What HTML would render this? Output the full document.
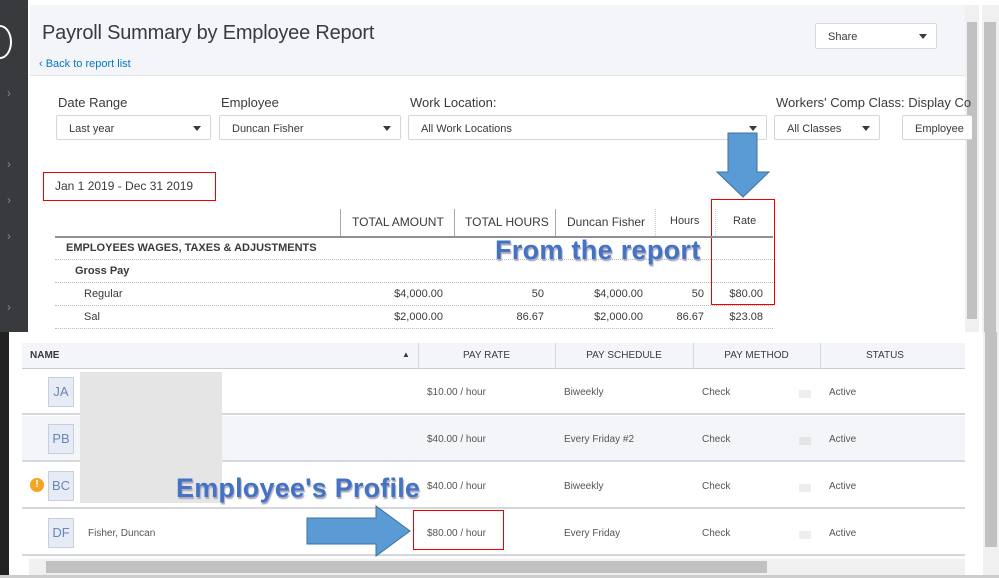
<!DOCTYPE html>
<html><head><meta charset="utf-8"><style>
*{box-sizing:border-box;margin:0;padding:0}
body{width:999px;height:578px;overflow:hidden;background:#fff;font-family:"Liberation Sans",sans-serif;color:#393a3d;position:relative}
.a{position:absolute}
.sel{position:absolute;height:25px;border:1px solid #d4d7dc;border-radius:2px;background:#fff;font-size:11px;line-height:26px;padding-left:12px}
.sel i{position:absolute;right:9px;top:10px;width:0;height:0;border-left:4px solid transparent;border-right:4px solid transparent;border-top:5px solid #393a3d}
.lbl{position:absolute;font-size:13px;top:95px}
.r{position:absolute;font-size:11px;text-align:right}
.dl{position:absolute;left:55px;width:718px;border-top:1px dotted #bbb}
.hdr{position:absolute;font-size:11px;color:#393a3d;text-align:center;top:350px}
.row{position:absolute;left:22px;width:943px;height:46px;border-bottom:2px solid #d4d7dc}
.av{position:absolute;left:26px;width:16px;height:30px;top:8px;width:26px;border:1px solid #ccd;background:#e6ecf5;color:#6b85b4;font-size:13px;text-align:center;line-height:28px}
.c{position:absolute;top:18px;font-size:10px;color:#555}
</style></head><body>
<div class="a" style="left:0;top:0;width:28px;height:332px;background:#393a3d"></div>
<div class="a" style="left:-12px;top:25px;width:24px;height:34px;border:2px solid #fff;border-radius:50%"></div>
<div class="a" style="left:7px;top:86px;color:#888;font-size:12px">›</div>
<div class="a" style="left:7px;top:157px;color:#888;font-size:12px">›</div>
<div class="a" style="left:7px;top:193px;color:#888;font-size:12px">›</div>
<div class="a" style="left:7px;top:229px;color:#888;font-size:12px">›</div>
<div class="a" style="left:7px;top:300px;color:#888;font-size:12px">›</div>
<div class="a" style="left:30px;top:5px;width:935px;height:71px;background:#f4f5f8;border-bottom:1px solid #e3e5e8"></div>
<div class="a" style="left:42px;top:22px;font-size:20px;letter-spacing:-0.2px;color:#393a3d">Payroll Summary by Employee Report</div>
<div class="a" style="left:39px;top:58px;font-size:11px;color:#0077c5">‹ Back to report list</div>
<div class="sel" style="left:815px;top:23px;width:122px;height:26px;line-height:27px">Share<i></i></div>
<div class="a" style="left:965px;top:5px;width:14px;height:330px;background:#f0f0f0"></div>
<div class="a" style="left:967px;top:22px;width:10px;height:297px;background:#c1c1c1"></div>
<div class="a" style="left:982px;top:5px;width:17px;height:330px;background:#f0f0f0"></div>
<div class="a" style="left:984px;top:22px;width:12px;height:310px;background:#c1c1c1"></div>
<div class="lbl" style="left:58px">Date Range</div>
<div class="lbl" style="left:221px">Employee</div>
<div class="lbl" style="left:410px">Work Location:</div>
<div class="lbl" style="left:776px">Workers' Comp Class: Display Co</div>
<div class="sel" style="left:56px;top:115px;width:155px">Last year<i></i></div>
<div class="sel" style="left:219px;top:115px;width:182px">Duncan Fisher<i></i></div>
<div class="sel" style="left:408px;top:115px;width:359px">All Work Locations<i></i></div>
<div class="sel" style="left:774px;top:115px;width:106px">All Classes<i></i></div>
<div class="sel" style="left:902px;top:115px;width:70px;border-right:none">Employee</div>
<div class="a" style="left:43px;top:172px;width:173px;height:29px;border:1px solid #e00;font-size:12px;line-height:26px;padding-left:11px">Jan 1 2019 - Dec 31 2019</div>
<svg class="a" style="left:716px;top:132px" width="54" height="66"><polygon points="12,1 41,1 41,40 53,40 27,65 1,40 12,40" fill="#5b9bd5" stroke="#41719c"/></svg>
<div class="a" style="left:711px;top:199px;width:64px;height:106px;border:1px solid #e00"></div>
<div class="a" style="left:340px;top:209px;height:27px;border-left:1px solid #aaa"></div>
<div class="a" style="left:454px;top:209px;height:27px;border-left:1px solid #aaa"></div>
<div class="a" style="left:555px;top:209px;height:27px;border-left:1px solid #aaa"></div>
<div class="a" style="left:655px;top:209px;height:27px;border-left:1px dotted #ccc"></div>
<div class="a" style="left:715px;top:209px;height:27px;border-left:1px dotted #ccc"></div>
<div class="a" style="left:352px;top:215px;font-size:12px">TOTAL AMOUNT</div>
<div class="a" style="left:465px;top:215px;font-size:12px">TOTAL HOURS</div>
<div class="a" style="left:567px;top:215px;font-size:12px">Duncan Fisher</div>
<div class="a" style="left:670px;top:215px;font-size:11px">Hours</div>
<div class="a" style="left:733px;top:215px;font-size:11px">Rate</div>
<div class="a" style="left:55px;top:236px;width:718px;border-top:2px solid #8d9096"></div>
<div class="a" style="left:66px;top:242px;font-size:11px;font-weight:bold;color:#393a3d">EMPLOYEES WAGES, TAXES &amp; ADJUSTMENTS</div>
<div class="dl" style="top:259px"></div>
<div class="a" style="left:75px;top:265px;font-size:11px;font-weight:bold">Gross Pay</div>
<div class="dl" style="top:282px"></div>
<div class="a" style="left:84px;top:288px;font-size:11px">Regular</div>
<div class="r" style="right:556px;top:288px">$4,000.00</div>
<div class="r" style="right:455px;top:288px">50</div>
<div class="r" style="right:356px;top:288px">$4,000.00</div>
<div class="r" style="right:295px;top:288px">50</div>
<div class="r" style="right:236px;top:288px">$80.00</div>
<div class="dl" style="top:305px"></div>
<div class="a" style="left:84px;top:311px;font-size:11px">Sal</div>
<div class="r" style="right:556px;top:311px">$2,000.00</div>
<div class="r" style="right:455px;top:311px">86.67</div>
<div class="r" style="right:356px;top:311px">$2,000.00</div>
<div class="r" style="right:295px;top:311px">86.67</div>
<div class="r" style="right:236px;top:311px">$23.08</div>
<div class="dl" style="top:328px"></div>
<div class="a" style="left:495px;top:235px;font-size:27px;font-weight:bold;letter-spacing:0.3px;color:#4472c4;text-shadow:1px 2px 1px #aab">From the report</div>
<!-- lower panel -->
<div class="a" style="left:9px;top:332px;width:990px;height:246px;background:#fff"></div>
<div class="a" style="left:0;top:332px;width:9px;height:246px;background:#222"></div>
<div class="a" style="left:22px;top:343px;width:943px;height:26px;background:#f4f5f8;border-bottom:1px solid #c9ccd1"></div>
<div class="a" style="left:30px;top:350px;font-size:10px;font-weight:bold">NAME</div>
<div class="a" style="left:402px;top:350px;font-size:8px">▲</div>
<div class="a" style="left:418px;top:343px;height:26px;border-left:1px solid #d4d7dc"></div>
<div class="a" style="left:555px;top:343px;height:26px;border-left:1px solid #d4d7dc"></div>
<div class="a" style="left:693px;top:343px;height:26px;border-left:1px solid #d4d7dc"></div>
<div class="a" style="left:820px;top:343px;height:26px;border-left:1px solid #d4d7dc"></div>
<div class="hdr" style="left:418px;width:137px;font-size:10px">PAY RATE</div>
<div class="hdr" style="left:555px;width:138px;font-size:10px">PAY SCHEDULE</div>
<div class="hdr" style="left:693px;width:127px;font-size:10px">PAY METHOD</div>
<div class="hdr" style="left:820px;width:130px;font-size:10px">STATUS</div>
<div class="row" style="top:369px"><div class="av">JA</div><div class="c" style="left:405px">$10.00 / hour</div><div class="c" style="left:542px">Biweekly</div><div class="c" style="left:680px">Check</div><div class="c" style="left:777px;top:21px;width:12px;height:8px;background:#eee"></div><div class="c" style="left:807px">Active</div></div>
<div class="row" style="top:416px;background:#f4f5f8"><div class="av">PB</div><div class="c" style="left:405px">$40.00 / hour</div><div class="c" style="left:542px">Every Friday #2</div><div class="c" style="left:680px">Check</div><div class="c" style="left:777px;top:21px;width:12px;height:8px;background:#e4e4e4"></div><div class="c" style="left:807px">Active</div></div>
<div class="row" style="top:463px"><div class="a" style="left:8px;top:15px;width:14px;height:14px;border-radius:50%;background:#f4a623;color:#fff;font-size:10px;font-weight:bold;text-align:center;line-height:14px">!</div><div class="av">BC</div><div class="c" style="left:405px">$40.00 / hour</div><div class="c" style="left:542px">Biweekly</div><div class="c" style="left:680px">Check</div><div class="c" style="left:777px;top:21px;width:12px;height:8px;background:#eee"></div><div class="c" style="left:807px">Active</div></div>
<div class="row" style="top:510px"><div class="av">DF</div><div class="c" style="left:66px">Fisher, Duncan</div><div class="c" style="left:405px">$80.00 / hour</div><div class="c" style="left:542px">Every Friday</div><div class="c" style="left:680px">Check</div><div class="c" style="left:777px;top:21px;width:12px;height:8px;background:#eee"></div><div class="c" style="left:807px">Active</div></div>
<div class="a" style="left:80px;top:372px;width:142px;height:131px;background:#e5e5e5"></div>
<div class="a" style="left:176px;top:473px;font-size:27px;font-weight:bold;letter-spacing:0.2px;color:#4472c4;text-shadow:1px 2px 1px #aab">Employee's Profile</div>
<svg class="a" style="left:306px;top:505px" width="106" height="52"><polygon points="1,13 70,13 70,1 104,26 70,51 70,39 1,39" fill="#5b9bd5" stroke="#41719c"/></svg>
<div class="a" style="left:413px;top:510px;width:91px;height:40px;border:1px solid #e00"></div>
<div class="a" style="left:29px;top:559px;width:936px;height:16px;background:#f0f0f0"></div>
<div class="a" style="left:46px;top:561px;width:721px;height:12px;background:#c1c1c1"></div>
<div class="a" style="left:965px;top:332px;width:14px;height:244px;background:#fff"></div>
<div class="a" style="left:983px;top:332px;width:16px;height:244px;background:#f0f0f0"></div>
<div class="a" style="left:985px;top:332px;width:12px;height:215px;background:#c1c1c1"></div>
<div class="a" style="left:0;top:575px;width:999px;height:3px;background:#ccc"></div>
</body></html>
